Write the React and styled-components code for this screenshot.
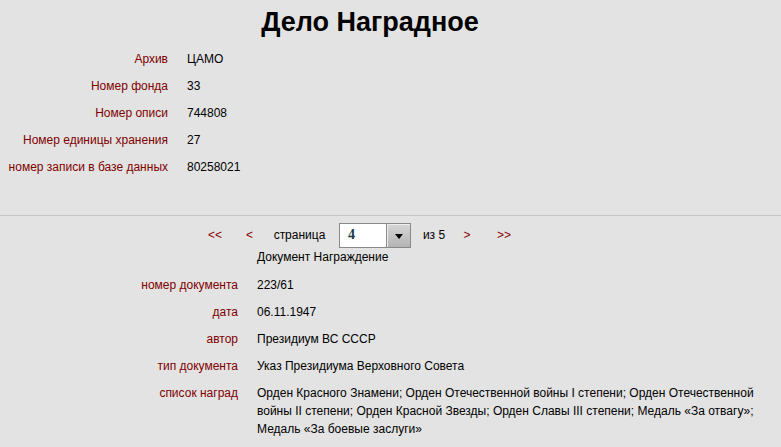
import React from "react";
import styled, { createGlobalStyle } from "styled-components";

const Global = createGlobalStyle`
  html, body { margin: 0; padding: 0; background: #e3e3e3; }
  body { font-family: "Liberation Sans", Arial, sans-serif; font-size: 12px; color: #000; }
`;

const Page = styled.div`
  width: 781px;
  min-height: 447px;
  background: #e3e3e3;
  overflow: hidden;
`;

const Title = styled.h1`
  margin: 0;
  height: 45px;
  line-height: 45px;
  font-size: 27px;
  font-weight: bold;
  text-align: center;
  padding-right: 41px;
  color: #000;
`;

const InfoGrid = styled.div`
  display: grid;
  grid-template-columns: ${(p) => p.$labelWidth}px ${(p) => p.$valueWidth}px;
  column-gap: 19px;
  grid-auto-rows: auto;
  margin-top: ${(p) => p.$top || 0}px;
`;

const Label = styled.div`
  color: #800000;
  text-align: right;
  line-height: 18px;
  padding: 4.5px 0;
  white-space: nowrap;
`;

const Value = styled.div`
  color: #000;
  line-height: 18px;
  padding: 4.5px 0;
`;

const Separator = styled.hr`
  margin: 35px 0 0;
  border: 0;
  border-top: 1px solid #c4c4c4;
  height: 0;
`;

const Pager = styled.div`
  display: grid;
  grid-template-columns: 38px 31px 69px 82px 36px 30px 44px;
  align-items: center;
  justify-items: center;
  height: 26px;
  margin: 6px 0 0 196px;
`;

const PageLink = styled.a`
  color: #8b0000;
  text-decoration: none;
  font-size: 12px;
  cursor: pointer;
`;

const PagerText = styled.span`
  color: #000;
`;

const Select = styled.div`
  display: flex;
  width: 72px;
  height: 25px;
  box-sizing: border-box;
  border: 1px solid #8a8a8a;
  background: #fff;
`;

const SelectValue = styled.div`
  flex: 1;
  display: flex;
  align-items: center;
  padding-left: 8px;
  font-family: "Liberation Serif", "Times New Roman", serif;
  font-weight: bold;
  font-size: 14px;
  color: #1c3a44;
  border-right: 1px solid #8a8a8a;
`;

const SelectButton = styled.div`
  width: 23px;
  display: flex;
  align-items: center;
  justify-content: center;
  background: linear-gradient(#d6d6d6, #b4b4b4);
  box-shadow: inset 1px 1px 0 #eeeeee;
`;

const Arrow = styled.span`
  width: 0;
  height: 0;
  border-left: 4px solid transparent;
  border-right: 4px solid transparent;
  border-top: 5px solid #000;
  margin-top: 2px;
`;

const DocHeading = styled.div`
  margin-left: 257px;
  line-height: 18px;
  color: #000;
`;

const top = [
  ["Архив", "ЦАМО"],
  ["Номер фонда", "33"],
  ["Номер описи", "744808"],
  ["Номер единицы хранения", "27"],
  ["номер записи в базе данных", "80258021"],
];

const bottom = [
  ["номер документа", "223/61"],
  ["дата", "06.11.1947"],
  ["автор", "Президиум ВС СССР"],
  ["тип документа", "Указ Президиума Верховного Совета"],
  [
    "список наград",
    "Орден Красного Знамени; Орден Отечественной войны I степени; Орден Отечественной войны II степени; Орден Красной Звезды; Орден Славы III степени; Медаль «За отвагу»; Медаль «За боевые заслуги»",
  ],
];

export default function App() {
  return (
    <Page>
      <Global />
      <Title>Дело Наградное</Title>
      <InfoGrid $labelWidth={168} $valueWidth={400}>
        {top.map(([l, v]) => (
          <React.Fragment key={l}>
            <Label>{l}</Label>
            <Value>{v}</Value>
          </React.Fragment>
        ))}
      </InfoGrid>
      <Separator />
      <Pager>
        <PageLink>&lt;&lt;</PageLink>
        <PageLink>&lt;</PageLink>
        <PagerText>страница</PagerText>
        <Select>
          <SelectValue>4</SelectValue>
          <SelectButton>
            <Arrow />
          </SelectButton>
        </Select>
        <PagerText>из 5</PagerText>
        <PageLink>&gt;</PageLink>
        <PageLink>&gt;&gt;</PageLink>
      </Pager>
      <DocHeading>Документ Награждение</DocHeading>
      <InfoGrid $labelWidth={238} $valueWidth={512} $top={5}>
        {bottom.map(([l, v]) => (
          <React.Fragment key={l}>
            <Label>{l}</Label>
            <Value>{v}</Value>
          </React.Fragment>
        ))}
      </InfoGrid>
    </Page>
  );
}
